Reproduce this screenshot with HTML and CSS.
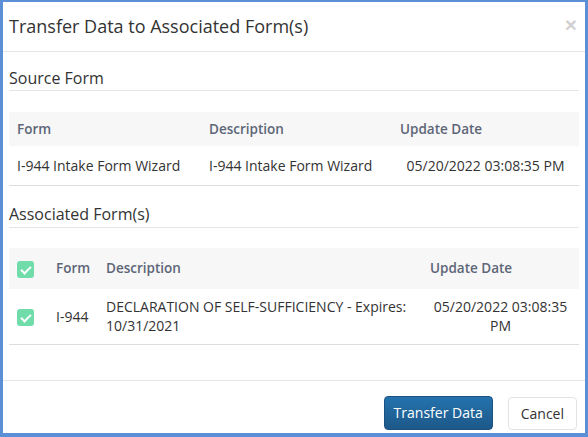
FILE: index.html
```html
<!DOCTYPE html>
<html lang="en">
<head>
  <meta charset="UTF-8">
  <title>Transfer Data to Associated Form(s)</title>
  <link rel="stylesheet" href="styles.css">
</head>
<body>

<div class="modal">
  <div class="modal-header">
    <h3 class="modal-title">Transfer Data to Associated Form(s)</h3>
    <button type="button" class="close">&times;</button>
  </div>

  <div class="modal-body">
    <h4 class="section-title">Source Form</h4>
    <table class="grid source-grid">
      <colgroup>
        <col style="width: 192px">
        <col style="width: 191px">
        <col>
      </colgroup>
      <thead>
        <tr>
          <th>Form</th>
          <th>Description</th>
          <th>Update Date</th>
        </tr>
      </thead>
      <tbody>
        <tr>
          <td>I-944 Intake Form Wizard</td>
          <td>I-944 Intake Form Wizard</td>
          <td class="date">05/20/2022 03:08:35 PM</td>
        </tr>
      </tbody>
    </table>

    <h4 class="section-title">Associated Form(s)</h4>
    <table class="grid assoc-grid">
      <colgroup>
        <col style="width: 39px">
        <col style="width: 50px">
        <col style="width: 324px">
        <col>
      </colgroup>
      <thead>
        <tr>
          <th><span class="check"></span></th>
          <th>Form</th>
          <th>Description</th>
          <th>Update Date</th>
        </tr>
      </thead>
      <tbody>
        <tr>
          <td><span class="check"></span></td>
          <td>I-944</td>
          <td>DECLARATION OF SELF-SUFFICIENCY - Expires: 10/31/2021</td>
          <td class="date">05/20/2022 03:08:35 PM</td>
        </tr>
      </tbody>
    </table>
  </div>

  <div class="modal-footer">
    <button type="button" class="btn btn-primary">Transfer Data</button>
    <button type="button" class="btn btn-default">Cancel</button>
  </div>
</div>

</body>
</html>
```

FILE: styles.css
```css
html, body {
  margin: 0;
  padding: 0;
  height: 100%;
}

body {
  font-family: "Open Sans", "Liberation Sans", Arial, sans-serif;
  color: #333;
  background-color: #fff;
}

.modal {
  box-sizing: border-box;
  height: 437px;
  border-style: solid;
  border-color: #5b8fd6;
  border-width: 2px 3px 4px 3px;
  display: flex;
  flex-direction: column;
}

.modal-header {
  display: flex;
  justify-content: space-between;
  align-items: flex-start;
  padding: 11px 8px 12px 6px;
  border-bottom: 1px solid #e5e5e5;
}

.modal-title {
  margin: 0;
  font-size: 18px;
  font-weight: normal;
  line-height: 26px;
}

.close {
  background: none;
  border: none;
  padding: 0;
  margin-top: -1px;
  font-family: "Liberation Sans", Arial, sans-serif;
  font-size: 21px;
  font-weight: bold;
  line-height: 26px;
  color: #000;
  opacity: 0.18;
  cursor: pointer;
}

.modal-body {
  flex: 1;
  padding: 0 6px;
}

.section-title {
  margin: 16px 0 21px;
  padding-bottom: 2px;
  font-size: 16px;
  font-weight: normal;
  line-height: 20px;
  border-bottom: 1px solid #e5e5e5;
}

.grid {
  width: 100%;
  border-collapse: collapse;
  table-layout: fixed;
  font-size: 14px;
  line-height: 19px;
}

.grid th {
  background-color: #f7f7f7;
  color: #5d6677;
  font-size: 13.5px;
  font-weight: 600;
  text-align: left;
  padding: 8px 8px 7px;
  vertical-align: middle;
}

.grid td {
  padding: 10px 8px;
  border-bottom: 1px solid #ddd;
  vertical-align: middle;
}

.grid td.date {
  text-align: center;
}

.source-grid + .section-title {
  margin-top: 18px;
  margin-bottom: 20px;
  padding-bottom: 3px;
}

.assoc-grid th {
  padding-top: 11px;
  padding-bottom: 11px;
}

.assoc-grid td {
  padding-top: 8px;
  padding-bottom: 9px;
}

.check {
  display: inline-block;
  width: 17px;
  height: 17px;
  border-radius: 3px;
  background-color: #6fdcaa;
  position: relative;
  vertical-align: middle;
}

.check::after {
  content: "";
  position: absolute;
  left: 6px;
  top: 3px;
  width: 4px;
  height: 8px;
  border: solid #fff;
  border-width: 0 2px 2px 0;
  transform: rotate(45deg);
}

.modal-footer {
  display: flex;
  justify-content: flex-end;
  align-items: center;
  gap: 15px;
  padding: 15px 8px 3px;
  border-top: 1px solid #e5e5e5;
}

.btn {
  font-family: "Open Sans", "Liberation Sans", Arial, sans-serif;
  font-size: 14px;
  line-height: 20px;
  padding: 6px 12px;
  border-radius: 4px;
  white-space: nowrap;
  cursor: pointer;
}

.btn-primary {
  height: 34px;
  padding: 6px 9px;
  color: #fff;
  background: linear-gradient(#2472ad, #1d5889);
  border: 1px solid #1b5281;
}

.btn-default {
  height: 33px;
  padding: 6px 12px;
  color: #333;
  background-color: #fff;
  border: 1px solid #e3e3e3;
}
```
